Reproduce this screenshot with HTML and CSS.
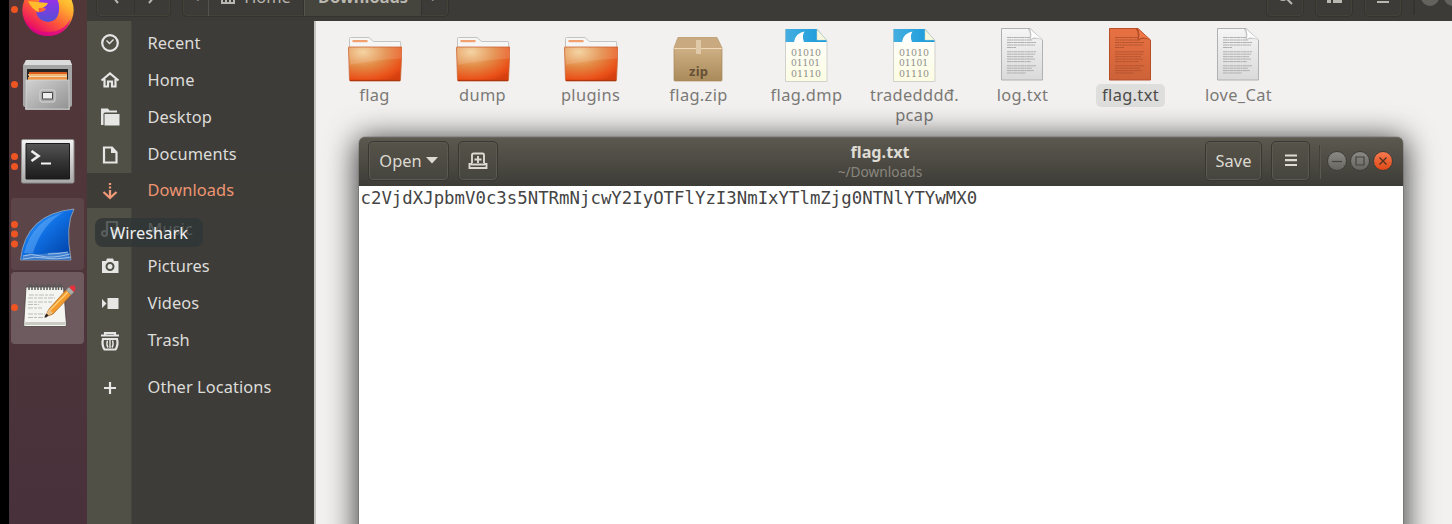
FILE: index.html
```html
<!DOCTYPE html>
<html lang="en">
<head>
<meta charset="utf-8">
<title>Downloads</title>
<link rel="stylesheet" href="styles.css">
</head>
<body>
<svg class="defs" width="0" height="0" aria-hidden="true">
  <defs>
    <radialGradient id="folderFill" cx=".27" cy=".15" r=".95"><stop offset="0" stop-color="#f3cf97"/><stop offset=".45" stop-color="#e38a45"/><stop offset=".85" stop-color="#ea5018"/><stop offset="1" stop-color="#d6400f"/></radialGradient>
    <linearGradient id="boxFill" x2="0" y2="1"><stop offset="0" stop-color="#d9bc92"/><stop offset="1" stop-color="#aa8a5a"/></linearGradient>
    <linearGradient id="paper" x2="0" y2="1"><stop offset="0" stop-color="#f5f5f5"/><stop offset="1" stop-color="#dadada"/></linearGradient>
    <linearGradient id="paperSel" x2="0" y2="1"><stop offset="0" stop-color="#e87142"/><stop offset="1" stop-color="#cd6238"/></linearGradient>
    <linearGradient id="capPaper" x2="0" y2="1"><stop offset="0" stop-color="#fff"/><stop offset="1" stop-color="#fcfce3"/></linearGradient>
    <linearGradient id="capTop"><stop offset="0" stop-color="#45aee0"/><stop offset="1" stop-color="#169adb"/></linearGradient>
    <linearGradient id="metal" x2="1" y2="1"><stop offset="0" stop-color="#d2d2d2"/><stop offset="1" stop-color="#929292"/></linearGradient>
    <linearGradient id="frame" x2="0" y2="1"><stop offset="0" stop-color="#f2f2f2"/><stop offset="1" stop-color="#a9a9a9"/></linearGradient>
    <linearGradient id="term" x2="0" y2="1"><stop offset="0" stop-color="#555"/><stop offset=".5" stop-color="#353535"/><stop offset="1" stop-color="#1c1c1c"/></linearGradient>
    <linearGradient id="fin" x1="0" y1="0" x2="1" y2="1"><stop offset="0" stop-color="#45a5ff"/><stop offset=".45" stop-color="#0f70e4"/><stop offset="1" stop-color="#003a9c"/></linearGradient>
    <linearGradient id="fox" x1="1" y1="0" x2=".3" y2="1"><stop offset="0" stop-color="#fff14d"/><stop offset=".35" stop-color="#ffb52e"/><stop offset=".65" stop-color="#ff5a38"/><stop offset="1" stop-color="#e6006c"/></linearGradient>
    <linearGradient id="globe" x2="0" y2="1"><stop offset="0" stop-color="#a42bea"/><stop offset="1" stop-color="#5151d4"/></linearGradient>
    <g id="folder">
      <path d="M1.5 13V1.5q0-1 1-1h18.500l4.500 4h26.500q.7 0 .7.700V14z" fill="#f6f6f5" stroke="#c3c3c1"/>
      <path d="M4.500 3h15v2.200h-15z" fill="#f1a070"/>
      <path d="M1 10h52.500q.500 0 .5.600L52.500 43q0 1-1 1H2.500q-1 0-1-1L.500 10.500q0-.5.500-.5z" fill="url(#folderFill)" stroke="#cc6535" stroke-width=".8"/>
      <path d="M1 10.500h52.500v11Q25 23 1.500 28z" fill="#fff" opacity=".12"/>
      <path d="M2 43.400h50" stroke="#a93411"/>
    </g>
    <g id="lines" fill="none">
      <path d="M6 9.500h24M6 12h25M6 14.500h29M6 17h28M6 19.500h9M6 23.800h29M6 26.200h28M6 28.700h26M6 31.100h28M6 33.600h24M6 37.800h29M6 40.200h25M6 42.600h27M6 45h19" stroke-width=".9" stroke-dasharray="4 .3 2 .3"/>
    </g>
    <g id="textdoc">
      <path d="M.5.500H29L41.500 12v40H.5z" fill="url(#paper)" stroke="#b1b1b1"/>
      <use href="#lines" stroke="#a8a8a8"/>
      <path d="M27 1h2l12 11Q34 9.500 28.500 12.500 30 6 27 1z" fill="#c7c7c7"/><path d="M29 1 41 11.500Q34 8 30 11 31 5 29 1z" fill="#fff"/>
    </g>
    <g id="textdocSel">
      <path d="M.5.500H29L41.500 12v40H.5z" fill="url(#paperSel)" stroke="#b64f28"/>
      <use href="#lines" stroke="#b0522f"/>
      <path d="M27 1h2l12 11Q34 9.500 28.500 12.500 30 6 27 1z" fill="#b14d27"/><path d="M29 1 41 11.500Q34 8 30 11 31 5 29 1z" fill="#ee7647"/>
    </g>
    <g id="capture">
      <path d="M.5 1.500H32L42 12.500v41H.5z" fill="url(#capPaper)" stroke="#d1d1cd"/>
      <path d="M.5 1H32l9.500 11v2H.5z" fill="url(#capTop)"/>
      <path d="M9 14Q10.500 5 19.500 3.500q-3 4.500-.5 10.500z" fill="#fff"/>
      <path d="M32 1.500V12h9.500z" fill="#f7f7df" stroke="#d3d5bd" stroke-width=".5"/>
      <g class="bits"><text x="6" y="27.500" textLength="30" lengthAdjust="spacingAndGlyphs">01010</text><text x="6" y="38" textLength="29" lengthAdjust="spacingAndGlyphs">01101</text><text x="6" y="48.500" textLength="30" lengthAdjust="spacingAndGlyphs">01110</text></g>
    </g>
  </defs>
</svg>
<div class="desktop">
  <nav class="dock">
    <div class="app firefox"><i class="dots one"></i>
      <svg width="52" height="52" viewBox="0 0 52 52"><circle cx="26" cy="26" r="25.700" fill="url(#fox)"/><path d="M2 35q7 13 24 13 16 0 23-14-5 18-23 18Q8 52 2 35z" fill="#d9058a" opacity=".75"/><path d="M14 24q3-12 14-13 10 2 9 14 0 12-11 13-10-1-12-10 7 1 10-3-5-3-10-5z" fill="url(#globe)"/><path d="M6 17q8 1 20 2-2 5-9 5-1 1 0 4-7-2-11-11z" fill="#ffbb2b"/></svg></div>
    <div class="app files"><i class="dots one"></i>
      <svg width="50" height="52" viewBox="0 0 50 52"><path d="M3 1h44l2 5v40q0 2-2 2v3H2v-3q-2 0-2-2V6z" fill="#a5a5a5"/><path d="M3 1h44l2 5H1z" fill="#dcdcdc"/><path d="M4 10h41v12H4z" fill="#242424"/><path d="M6 13h38v10H6z" fill="#d75c1d"/><path d="M5 15h39v1.500H5z" fill="#f4bb72"/><path d="M6 16.500h38v1.500H6z" fill="#f8d9ae"/><path d="M5 18h39v3H5z" fill="#ec974c"/><path d="M3 21h43v29H3z" fill="url(#metal)" stroke="#d8d8d8" stroke-width=".7"/><rect x="17" y="31" width="15" height="12" rx="2" fill="#aaa" stroke="#d8d8d8"/><path d="M19.500 33.500h10v6.500h-10z" fill="#eee" stroke="#4b4b4b"/></svg></div>
    <div class="app terminal"><i class="dots two"></i>
      <svg width="54" height="46" viewBox="0 0 54 46"><rect x=".5" y=".5" width="52.500" height="43.500" rx="1.500" fill="url(#frame)" stroke="#8e8e8e"/><path d="M5 4.500h43.500v35.500H5z" fill="url(#term)" stroke="#1a1a1a"/><path d="m10.500 12 7 5-7 5" fill="none" stroke="#eee" stroke-width="2.700"/><path d="M20 24.500h10" stroke="#f5f5f5" stroke-width="2"/></svg></div>
    <div class="app tile shark"><i class="dots three"></i>
      <svg width="55" height="53" viewBox="0 0 55 53"><path d="M.5 52Q5 6 54 1q-9 16-3 51z" fill="url(#fin)" stroke="#9aa8b9" stroke-width=".8"/><path d="M4 45Q13 12 44 4 22 16 13 45z" fill="#8bc9ff" opacity=".35"/><path d="M1 51.500q3-7 10-6 8 1.500 15 0t22-1.500l2.500 7.500z" fill="#3f7fd0"/><path d="M3 48q8-3 18 0t29-2M3 51q12-3 22-1t26-1M28 46q10 0 20-2" fill="none" stroke="#b4d0ee" stroke-width=".8"/></svg></div>
    <div class="app tile active gedit"><i class="dots one"></i>
      <svg width="54" height="46" viewBox="0 0 54 46"><path d="M3 4h37.500l3 38q0 1.500-1.500 1.500H2q-1.500 0-1.300-1.500z" fill="#f4f4f1" stroke="#4b4140" stroke-width=".8"/><path d="M1.500 39h41v3H1z" fill="#cacbc5"/><path d="M6 7V3q1.500-3 3 0v4M12 7V3q1.500-3 3 0v4M18 7V3q1.500-3 3 0v4M24 7V3q1.500-3 3 0v4M30 7V3q1.500-3 3 0v4M35.500 7V3q1.500-3 3 0v4" fill="none" stroke="#575757" stroke-width="1.500"/><path d="M6 12h26M5 15h27M5 19h24M5 21.500h11M5 25h14M5 31h17M5 34.500h20" stroke="#bbb" stroke-dasharray="5 1 3 1"/><path d="m22 34 4-8L43 7l5 5-18 19z" fill="#f49b2d" stroke="#a56320" stroke-width=".7"/><path d="m27 27 18-18" stroke="#ffcf79" stroke-width="1.400"/><path d="m22 34 4-8 4 4z" fill="#e8bf86"/><path d="m22 34 1.500-3 1.500 1.500z" fill="#222" stroke="#222"/><path d="m43 7 3-3 5 5-3 3z" fill="#a8aaa5"/><path d="m46 4q6-4 6.500 1-.500 3-1.500 4z" fill="#e8313b"/></svg></div>
  </nav>

  <main class="manager">
    <header class="topbar">
      <div class="tool nav-tool"><span><svg width="8" height="16" viewBox="0 0 8 16"><path d="m7 2-5 6 5 6" class="stroke"/></svg></span><span><svg width="8" height="16" viewBox="0 0 8 16"><path d="m1 2 5 6-5 6" class="stroke"/></svg></span></div>
      <div class="tool path-tool"><span class="tri">◂</span><span class="crumb"><svg width="14" height="15" viewBox="0 0 14 15"><path d="M1 6v8h12V6M5 14v-4h4v4" class="stroke"/></svg>Home</span><span class="crumb here">Downloads</span><span class="tri">▸</span></div>
      <div class="tool small t-search"><svg width="16" height="16" viewBox="0 0 16 16"><circle cx="6" cy="6" r="5" class="stroke"/><path d="m10 10 5 5" class="stroke"/></svg></div>
      <div class="tool small t-view"><svg width="15" height="14" viewBox="0 0 15 14"><path d="M0 9h4v4H0zM6 9h9v4H6zM0 3h4v4H0zM6 4h9v2H6z" fill="#b9b7b0"/></svg></div>
      <div class="tool small t-menu"><svg width="12" height="14" viewBox="0 0 12 14"><path d="M0 3h12M0 7.500h12M0 12h12" class="stroke"/></svg></div>
      <i class="rule"></i><i class="orb"></i><i class="orb"></i>
    </header>
    <div class="content">
      <ul class="places">
        <li><span class="ico"><svg width="20" height="20" viewBox="0 0 20 20"><circle cx="10" cy="10" r="7.800" class="line"/><path d="m6.500 7.500 3 3 4-4" class="line thin"/></svg></span><b>Recent</b></li>
        <li><span class="ico"><svg width="20" height="20" viewBox="0 0 20 20"><path d="m1.500 10.500 8.500-7 8.500 7M4.500 9v7.500h3.500V11.500h4v5h3.500V9" class="line"/></svg></span><b>Home</b></li>
        <li><span class="ico"><svg width="20" height="20" viewBox="0 0 20 20"><path d="M1 1.500h7l1.500 2H17v2H5q-1.500 0-1.500 1.500v11H1zM4.500 7h15v11.500h-15z" fill="#e6e6e5"/></svg></span><b>Desktop</b></li>
        <li><span class="ico"><svg width="20" height="20" viewBox="0 0 20 20"><path d="M4 2.500h8l4.500 5v10H4z" class="line"/><path d="M11 2v6h6z" fill="#e6e6e5"/></svg></span><b>Documents</b></li>
        <li class="current"><span class="ico"><svg width="20" height="20" viewBox="0 0 20 20"><path d="M10 2v2M10 5.500v2M10 9v7M3.500 11l6.500 6 6.500-6" fill="none" stroke="#f19a79" stroke-width="2.300"/></svg></span><b>Downloads</b></li>
        <li><span class="ico"><svg width="20" height="20" viewBox="0 0 20 20"><path d="M7 15V3h10v11" class="line"/><circle cx="4.500" cy="14.500" r="2.500" class="line"/><circle cx="15" cy="13.500" r="2" class="line"/></svg></span><b>Music</b></li>
        <li><span class="ico"><svg width="20" height="20" viewBox="0 0 20 20"><path d="M2 5h4l1-2.500h6L14 5h4q.5 0 .5.500v11q0 .5-.5.500H2z" fill="#e6e6e5"/><circle cx="10" cy="10.500" r="3.500" fill="none" stroke="#505047" stroke-width="2"/></svg></span><b>Pictures</b></li>
        <li><span class="ico"><svg width="20" height="20" viewBox="0 0 20 20"><path d="M7.500 5h11v11h-11zM2 6l4.500 4.500L2 15z" fill="#e6e6e5"/></svg></span><b>Videos</b></li>
        <li><span class="ico"><svg width="20" height="20" viewBox="0 0 20 20"><path d="M1 4.500h18M5 4V2h10v2" class="line"/><path d="M3 8h14q1.500 6-1.500 10.500h-11Q1.500 14 3 8z" class="line"/><path d="M7.500 9.500q-1.500 4 .5 7M10 9v8M12.500 9.500q1.500 4-.5 7" class="line thin"/></svg></span><b>Trash</b></li>
        <li class="other"><span class="ico"><svg width="20" height="20" viewBox="0 0 20 20"><path d="M4 10h12M10 4v12" class="line"/></svg></span><b>Other Locations</b></li>
      </ul>
      <div class="grid">
        <figure><svg width="54" height="54" viewBox="0 -9 54 54"><use href="#folder"/></svg><figcaption>flag</figcaption></figure>
        <figure><svg width="54" height="54" viewBox="0 -9 54 54"><use href="#folder"/></svg><figcaption>dump</figcaption></figure>
        <figure><svg width="54" height="54" viewBox="0 -9 54 54"><use href="#folder"/></svg><figcaption>plugins</figcaption></figure>
        <figure><svg width="54" height="54" viewBox="0 -9 54 54"><path d="M6 .5h39L50 11v32q0 1-1 1H3q-1 0-1-1V11z" fill="url(#boxFill)" stroke="#a98658" stroke-width=".7"/><path d="M6 .5h39L50 11H2z" fill="#c9aa80"/><path d="M2 11.500h48" stroke="#eed8b8"/><path d="M24 3h5v14h-5z" fill="#dfc9a8"/><text class="zip" x="17" y="39" textLength="19">zip</text></svg><figcaption>flag.zip</figcaption></figure>
        <figure><svg width="43" height="54" viewBox="0 0 43 54"><use href="#capture"/></svg><figcaption>flag.dmp</figcaption></figure>
        <figure><svg width="43" height="54" viewBox="0 0 43 54"><use href="#capture"/></svg><figcaption class="long">tradedddđ.<br>pcap</figcaption></figure>
        <figure><svg width="43" height="54" viewBox="0 0 43 54"><use href="#textdoc"/></svg><figcaption>log.txt</figcaption></figure>
        <figure class="selected"><svg width="43" height="54" viewBox="0 0 43 54"><use href="#textdocSel"/></svg><figcaption>flag.txt</figcaption></figure>
        <figure><svg width="43" height="54" viewBox="0 0 43 54"><use href="#textdoc"/></svg><figcaption>love_Cat</figcaption></figure>
      </div>
    </div>
  </main>

  <section class="editor">
    <header class="titlebar">
      <button class="btn open">Open<svg width="12" height="7" viewBox="0 0 12 7"><path d="M0 0h12L6 6.500z" fill="#dddad2"/></svg></button>
      <button class="btn new"><svg width="20" height="18" viewBox="0 0 20 18"><path d="M4 11V3q0-1.500 1.500-1.500h9Q16 1.500 16 3v8M4 12H1.500v4h17v-4H16M4 11.500v1h12v-1M10 4v7M6.500 7.500h7" fill="none" stroke="#dddad2" stroke-width="1.900"/></svg></button>
      <div class="title"><strong>flag.txt</strong><small>~/Downloads</small></div>
      <button class="btn save">Save</button>
      <button class="btn menu"><svg width="12" height="13" viewBox="0 0 12 13"><path d="M0 1.500h12M0 6.200h12M0 11h12" stroke="#dddad2" stroke-width="2.200"/></svg></button>
      <i class="divider"></i>
      <div class="controls"><i><svg width="20" height="20" viewBox="0 0 20 20"><path d="M5 10.500h10" stroke="#45443f" stroke-width="1.200"/></svg></i><i><svg width="20" height="20" viewBox="0 0 20 20"><path d="M6 6h8v8H6z" fill="none" stroke="#45443f" stroke-width="1.200"/></svg></i><i class="close"><svg width="20" height="20" viewBox="0 0 20 20"><path d="m6.500 6.500 7 7M13.500 6.500l-7 7" stroke="#55311f" stroke-width="1.400"/></svg></i></div>
    </header>
    <pre class="text">c2VjdXJpbmV0c3s5NTRmNjcwY2IyOTFlYzI3NmIxYTlmZjg0NTNlYTYwMX0</pre>
  </section>
  <div class="tooltip">Wireshark</div>
</div>
</body>
</html>
```
FILE: styles.css
```css
* { box-sizing: border-box; }
body { margin: 0; overflow: hidden; background: #000; font-family: "Noto Sans", "Open Sans", sans-serif; font-size: 16.4px; }
svg { display: block; flex: none; }
.defs { position: absolute; }
.desktop { position: relative; display: flex; width: 1452px; height: 524px; padding-left: 9px; overflow: hidden; }

.dock { width: 78px; flex: none; padding: 0 3px 0 2px; background: linear-gradient(#523739, #4f363a 45%, #48313b); }
.app { position: relative; display: flex; width: 73px; height: 72px; align-items: center; justify-content: center; margin-bottom: 2px; border-radius: 4px; }
.firefox { margin-top: -26px; }
.tile { background: rgba(255, 255, 255, .08); }
.active { background: rgba(255, 255, 255, .19); }
.files { margin-top: 3px; }
.terminal { margin-top: 3px; }
.terminal svg { margin-top: 4px; }
.gedit svg { margin: 0 0 5px 4px; }
.dots { position: absolute; left: 0; top: 50%; width: 7px; height: 7px; margin-top: -4px; border-radius: 50%; background: #ef5522; }
.two { margin-top: -7px; box-shadow: 0 10px #ef5522; }
.three { margin-top: -13px; box-shadow: 0 9.5px #ef5522, 0 19.5px #ef5522; }

.manager { width: 1365px; flex: none; }
.topbar { display: flex; height: 21px; align-items: flex-start; overflow: hidden; background: #3d3b37; color: #b9b7b0; }
.tool { display: flex; height: 38px; flex: none; margin-top: -21px; padding-bottom: 3px; border: 1px solid #35332f; border-radius: 5px; box-shadow: inset 0 0 0 1px #454339; align-items: center; justify-content: center; }
.nav-tool { width: 75px; margin-left: 9px; }
.nav-tool span { display: flex; width: 50%; height: 100%; align-items: center; justify-content: center; }
.nav-tool span + span { border-left: 1px solid #35332f; }
.path-tool { width: 267px; margin-left: 11px; padding-bottom: 0; justify-content: flex-start; }
.tri { display: flex; flex: none; width: 25px; height: 100%; padding-bottom: 3px; align-items: center; justify-content: center; font-size: 11px; }
.crumb { display: flex; flex: none; height: 100%; width: 96px; padding-bottom: 3px; align-items: center; justify-content: center; gap: 9px; border-left: 1px solid #55534b; border-right: 1px solid #35332f; }
.here { width: 118px; background: #45443d; font-weight: 700; font-size: 16.4px; }
.small { width: 38px; }
.t-search { margin-left: 817px; }
.t-view { margin-left: 11px; }
.t-menu { margin-left: 11px; }
.rule { flex: none; width: 2px; height: 15px; margin: 0 6px 0 11px; background: #343430; }
.orb { flex: none; width: 18px; height: 18px; margin: -12px 5px 0 0; border-radius: 50%; background: #64625d; }
.stroke { fill: none; stroke: #b9b7b0; stroke-width: 2; }

.content { display: flex; height: 503px; }
.places { width: 227px; flex: none; margin: 0; padding: 3.5px 0 0; list-style: none; background: linear-gradient(90deg, #505047 44px, #45443e 44px, #3e3c38 46px); color: #dddcda; }
.places li { display: flex; height: 37.2px; align-items: center; }
.places b { font-weight: 400; padding: 0 0 2px 15.5px; letter-spacing: .08px; }
.places .current { height: 35px; margin: 0 0 2.2px; background: #3d3c37; color: #ee9573; }
.places .other { margin-top: 10px; }
.ico { display: flex; width: 45px; justify-content: center; }
.line { fill: none; stroke: #e6e6e5; stroke-width: 2.2; }
.thin { stroke-width: 1.4; }

.grid { display: grid; flex: 1; grid-template-columns: repeat(9, 108px); align-content: start; padding: 7px 0 0 5px; background: #f2f1f0; border-left: 2px solid #c5c3c0; color: #7b7976; }
figure { display: flex; margin: 0 0 0 -1px; flex-direction: column; align-items: center; }
figcaption { margin-top: 2px; padding: 0 6px; height: 23px; border-radius: 5px; line-height: 22px; text-align: center; white-space: nowrap; letter-spacing: .35px; }
.long { line-height: 20px; padding-top: 1px; }
.selected figcaption { background: #dededc; color: #4c4b49; }
.bits { font: 8.5px "DejaVu Serif", serif; fill: #90908c; }
.zip { font: 700 13px "Noto Sans", sans-serif; fill: #665036; }

.editor { position: absolute; left: 359px; top: 137px; width: 1044px; height: 420px; border-radius: 7px 7px 0 0; box-shadow: 0 0 0 1px rgba(0, 0, 0, .12), 0 4px 30px 3px rgba(0, 0, 0, .75); background: #fff; }
.titlebar { display: flex; height: 49px; align-items: flex-start; padding: 4px 9px 0; border-radius: 6px 6px 0 0; background: linear-gradient(#5c594f, #3d3c37); box-shadow: inset 0 1px #68655c; }
.btn { display: flex; flex: none; height: 40px; padding: 0 0 1px; align-items: center; justify-content: center; font: inherit; color: #dddad2; background: linear-gradient(#565349, #45443e); border: 1px solid #383731; border-radius: 5px; box-shadow: inset 0 0 0 1px #5b5950; }
.open { width: 81px; gap: 4px; }
.new { width: 40px; margin-left: 9px; }
.title { display: flex; flex: none; width: 100px; margin: 1px 275px 0 332px; flex-direction: column; align-items: center; color: #dfdcd4; }
.title strong { height: 20px; font-size: 16.2px; line-height: 21px; }
.title small { font-size: 13.7px; line-height: 19px; color: #89867e; }
.save { width: 57px; }
.menu { width: 39px; margin-left: 9px; }
.divider { flex: none; width: 2px; height: 34px; margin: 4px 6px 0 9px; background: #42413a; border-right: 1px solid #5b594f; }
.controls { display: flex; flex: none; gap: 3px; margin-top: 10px; }
.controls i { width: 20px; height: 20px; border: 1px solid #3f3e39; border-radius: 50%; background: linear-gradient(#8b8983, #686660); }
.controls svg { margin: -1px; }
.controls .close { background: linear-gradient(#f5794f, #df4a17); }
.text { margin: 0; padding: 0 0 0 1.5px; font: 17.37px/25px "DejaVu Sans Mono", "Liberation Mono", monospace; color: #444; }

.tooltip { position: absolute; left: 95px; top: 218px; width: 108px; height: 29px; border-radius: 8px; background: rgba(46, 52, 54, .78); color: #f0f0f0; line-height: 29px; text-align: center; }
```
